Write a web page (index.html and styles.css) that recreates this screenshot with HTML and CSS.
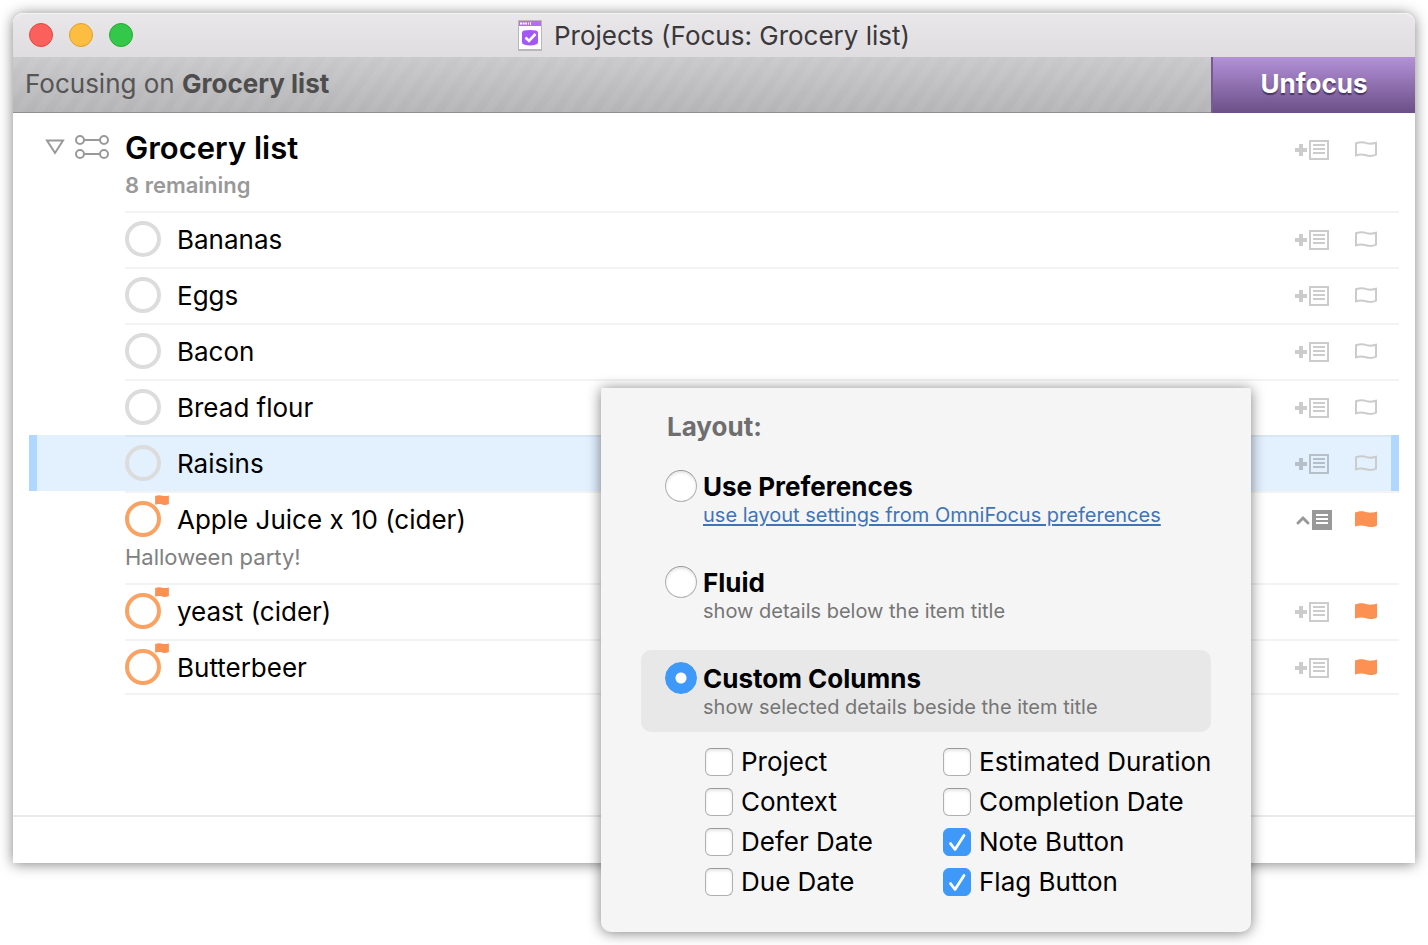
FILE: index.html
```
<!DOCTYPE html>
<html lang="en">
<head>
<meta charset="utf-8">
<meta name="viewport" content="width=device-width, initial-scale=1">
<title>Projects (Focus: Grocery list)</title>
<link rel="stylesheet" href="styles.css">
</head>
<body>
<svg class="symbols" aria-hidden="true">
  <symbol id="note-add" viewBox="0 0 37 20">
    <path d="M4 4h4v4h4v4H8v4H4v-4H0V8h4z" fill="currentColor"/>
    <path d="M15 1h18v18H15z" fill="none" stroke="currentColor" stroke-width="2"/>
    <path d="M18 5h12M18 9h12M18 13h12" stroke="currentColor" stroke-width="2"/>
  </symbol>
  <symbol id="note-open" viewBox="0 0 37 20">
    <path d="M3 13l5-5 5 5" fill="none" stroke="currentColor" stroke-width="3" stroke-linecap="round"/>
    <path d="M17 0h20v20H17z" fill="currentColor"/>
    <path d="M21 5h12M21 9h12M21 13h12" stroke="#fff" stroke-width="2"/>
  </symbol>
  <symbol id="flag-outline" viewBox="0 0 22 16">
    <path d="M1 2.300C7 .2 9 1.300 12 2.200C15 3 18 2.700 21 1.800V13.600C17 15.600 14 15.100 11 14.200C8 13.300 4 13.300 1 14.300Z" fill="none" stroke="currentColor" stroke-width="2"/>
  </symbol>
  <symbol id="flag-solid" viewBox="0 0 22 16">
    <path d="M0 1.500C6-.7 9 .4 12 1.300C15 2.100 18 1.900 22 .6V14.400C17 16.600 14 16.200 11 15.200C8 14.200 4 14.100 0 15.600Z" fill="currentColor"/>
  </symbol>
</svg>

<main class="window">
  <header class="titlebar">
    <div class="lights">
      <button class="light light-close" type="button" aria-label="Close"></button>
      <button class="light light-min" type="button" aria-label="Minimize"></button>
      <button class="light light-zoom" type="button" aria-label="Zoom"></button>
    </div>
    <div class="title">
      <svg class="doc-icon" viewBox="0 0 24 31" aria-hidden="true">
        <path d="M0 0h24v31H0z" fill="#b9b7ba"/>
        <path d="M1 1h22v28H1z" fill="#fff"/>
        <path d="M1 1h22v5H1z" fill="#b46dfa"/>
        <path d="M2 3.500h7M10 3.500h1" stroke="#fff" stroke-width="2" stroke-dasharray="2 .6"/>
        <path d="M12.500 2v3" stroke="#fff"/>
        <path d="M4 13Q4 11 6 10.600Q12 9.300 18 10.600Q20 11 20 13V22Q20 24 18 24.600Q12 26.500 6 24.600Q4 24 4 22Z" fill="#a357f5"/>
        <path d="M7.500 17.500l3.500 3.500 6.500-7" fill="none" stroke="#fff" stroke-width="2.600"/>
      </svg>
      <h1 class="title-text">Projects (Focus: Grocery list)</h1>
    </div>
  </header>

  <div class="focusbar">
    <p class="focus-label">Focusing on <strong>Grocery list</strong></p>
    <button class="unfocus" type="button">Unfocus</button>
  </div>

  <section class="outline">
    <div class="project">
      <div class="handles">
        <svg class="disclosure" viewBox="0 0 20 16" aria-hidden="true"><path d="M2 1.500h16L10 14z" fill="none" stroke="#999" stroke-width="2"/></svg>
        <svg class="parallel" viewBox="0 0 34 24" aria-hidden="true">
          <g fill="none" stroke="#999" stroke-width="2"><path d="M9 5h16M9 19h16"/><circle cx="5" cy="5" r="4"/><circle cx="29" cy="5" r="4"/><circle cx="5" cy="19" r="4"/><circle cx="29" cy="19" r="4"/></g>
        </svg>
      </div>
      <div class="project-text">
        <h2 class="project-name">Grocery list</h2>
        <p class="remaining">8 remaining</p>
      </div>
      <div class="actions">
        <button type="button" class="icon-btn" aria-label="Add note"><svg class="note"><use href="#note-add"/></svg></button>
        <button type="button" class="icon-btn" aria-label="Flag"><svg class="flag"><use href="#flag-outline"/></svg></button>
      </div>
    </div>

    <ul class="items">
      <li class="item"><div class="line">
        <button type="button" class="status" aria-label="Complete Bananas"></button><span class="name">Bananas</span>
        <div class="actions"><button type="button" class="icon-btn" aria-label="Add note"><svg class="note"><use href="#note-add"/></svg></button><button type="button" class="icon-btn" aria-label="Flag"><svg class="flag"><use href="#flag-outline"/></svg></button></div>
      </div></li>
      <li class="item"><div class="line">
        <button type="button" class="status" aria-label="Complete Eggs"></button><span class="name">Eggs</span>
        <div class="actions"><button type="button" class="icon-btn" aria-label="Add note"><svg class="note"><use href="#note-add"/></svg></button><button type="button" class="icon-btn" aria-label="Flag"><svg class="flag"><use href="#flag-outline"/></svg></button></div>
      </div></li>
      <li class="item"><div class="line">
        <button type="button" class="status" aria-label="Complete Bacon"></button><span class="name">Bacon</span>
        <div class="actions"><button type="button" class="icon-btn" aria-label="Add note"><svg class="note"><use href="#note-add"/></svg></button><button type="button" class="icon-btn" aria-label="Flag"><svg class="flag"><use href="#flag-outline"/></svg></button></div>
      </div></li>
      <li class="item"><div class="line">
        <button type="button" class="status" aria-label="Complete Bread flour"></button><span class="name">Bread flour</span>
        <div class="actions"><button type="button" class="icon-btn" aria-label="Add note"><svg class="note"><use href="#note-add"/></svg></button><button type="button" class="icon-btn" aria-label="Flag"><svg class="flag"><use href="#flag-outline"/></svg></button></div>
      </div></li>
      <li class="item item-selected"><div class="line">
        <button type="button" class="status" aria-label="Complete Raisins"></button><span class="name">Raisins</span>
        <div class="actions"><button type="button" class="icon-btn" aria-label="Add note"><svg class="note"><use href="#note-add"/></svg></button><button type="button" class="icon-btn" aria-label="Flag"><svg class="flag"><use href="#flag-outline"/></svg></button></div>
      </div></li>
      <li class="item"><div class="line">
        <button type="button" class="status status-flagged" aria-label="Complete Apple Juice"><svg class="badge"><use href="#flag-solid"/></svg></button><span class="name">Apple Juice x 10 (cider)</span>
        <div class="actions"><button type="button" class="icon-btn icon-open" aria-label="Hide note"><svg class="note"><use href="#note-open"/></svg></button><button type="button" class="icon-btn icon-flagged" aria-label="Unflag"><svg class="flag"><use href="#flag-solid"/></svg></button></div>
      </div>
      <p class="item-note">Halloween party!</p></li>
      <li class="item"><div class="line">
        <button type="button" class="status status-flagged" aria-label="Complete yeast"><svg class="badge"><use href="#flag-solid"/></svg></button><span class="name">yeast (cider)</span>
        <div class="actions"><button type="button" class="icon-btn" aria-label="Add note"><svg class="note"><use href="#note-add"/></svg></button><button type="button" class="icon-btn icon-flagged" aria-label="Unflag"><svg class="flag"><use href="#flag-solid"/></svg></button></div>
      </div></li>
      <li class="item item-last"><div class="line">
        <button type="button" class="status status-flagged" aria-label="Complete Butterbeer"><svg class="badge"><use href="#flag-solid"/></svg></button><span class="name">Butterbeer</span>
        <div class="actions"><button type="button" class="icon-btn" aria-label="Add note"><svg class="note"><use href="#note-add"/></svg></button><button type="button" class="icon-btn icon-flagged" aria-label="Unflag"><svg class="flag"><use href="#flag-solid"/></svg></button></div>
      </div></li>
    </ul>
  </section>
  <footer class="statusbar"></footer>
</main>

<aside class="popover">
  <h2 class="popover-title">Layout:</h2>
  <div class="options">
    <div class="option">
      <input class="radio" type="radio" name="layout" id="layout-prefs">
      <div><label class="option-name" for="layout-prefs">Use Preferences</label>
      <a class="option-hint option-link" href="#">use layout settings from OmniFocus preferences</a></div>
    </div>
    <div class="option">
      <input class="radio" type="radio" name="layout" id="layout-fluid">
      <div><label class="option-name" for="layout-fluid">Fluid</label>
      <p class="option-hint">show details below the item title</p></div>
    </div>
    <div class="option option-active">
      <input class="radio" type="radio" name="layout" id="layout-custom" checked>
      <div><label class="option-name" for="layout-custom">Custom Columns</label>
      <p class="option-hint">show selected details beside the item title</p></div>
    </div>
  </div>
  <div class="columns">
    <label class="column"><input class="check" type="checkbox">Project</label>
    <label class="column"><input class="check" type="checkbox">Estimated Duration</label>
    <label class="column"><input class="check" type="checkbox">Context</label>
    <label class="column"><input class="check" type="checkbox">Completion Date</label>
    <label class="column"><input class="check" type="checkbox">Defer Date</label>
    <label class="column"><input class="check" type="checkbox" checked>Note Button</label>
    <label class="column"><input class="check" type="checkbox">Due Date</label>
    <label class="column"><input class="check" type="checkbox" checked>Flag Button</label>
  </div>
</aside>
</body>
</html>
```

FILE: styles.css
```
* { box-sizing: border-box; }

body {
  margin: 0;
  min-height: 100vh;
  padding: 13px 13px 82px;
  display: flex;
  background: #fff;
  color: #000;
  font: 400 26px/34px Inter, "Liberation Sans", sans-serif;
}

h1, h2, p, ul { margin: 0; padding: 0; }
ul { list-style: none; }
button { margin: 0; padding: 0; border: 0; background: none; font: inherit; color: inherit; }
.symbols { position: absolute; width: 0; height: 0; }

/* Window */
.window {
  flex: 1;
  min-width: 0;
  display: flex;
  flex-direction: column;
  border-radius: 10px 10px 0 0;
  background: #fff;
  box-shadow: 0 1px 14px rgba(0, 0, 0, .5);
}

.titlebar {
  height: 44px;
  padding: 0 16px;
  display: grid;
  grid-template-columns: 1fr auto 1fr;
  align-items: center;
  border-radius: 10px 10px 0 0;
  background: linear-gradient(#e9e7ea, #dfdde0);
  box-shadow: inset 0 1px #f6f5f6;
}
.lights { display: flex; gap: 16px; }
.light { width: 24px; height: 24px; border-radius: 50%; border: 1px solid; }
.light-close { background: #fc605c; border-color: #e2463f; }
.light-min { background: #fdbd40; border-color: #dea032; }
.light-zoom { background: #34c84a; border-color: #27aa35; }
.title { display: flex; align-items: center; gap: 12px; }
.doc-icon { width: 24px; height: 31px; }
.title-text { padding-top: 2px; font-size: 26px; font-weight: 400; color: #3a383b; }

.focusbar {
  height: 56px;
  display: flex;
  justify-content: space-between;
  background:
    repeating-linear-gradient(125deg, rgba(255, 255, 255, .05) 0 7px, rgba(255, 255, 255, 0) 9px 16px),
    linear-gradient(#c9c8ca, #b4b3b5);
  box-shadow: inset 0 -1px #8f8f8f;
}
.focus-label { padding-left: 12px; line-height: 54px; color: #555; }
.focus-label strong { color: #4d4d4d; }
.unfocus {
  width: 204px;
  padding-bottom: 2px;
  border-left: 2px solid #765a94;
  background: linear-gradient(#b391d8, #6b4f86);
  color: #fff;
  font-weight: 700;
  text-shadow: 0 2px 1px rgba(50, 30, 70, .7);
}

/* Outline */
.outline { flex: 1; }
.project { display: flex; margin: 0 16px; min-height: 98px; padding-top: 16px; }
.handles { width: 96px; padding: 6px 16px 0; display: flex; gap: 10px; flex: none; }
.disclosure { width: 20px; height: 16px; margin-top: 4px; }
.parallel { width: 34px; height: 24px; }
.project-name { font-size: 31px; font-weight: 600; line-height: 38px; }
.remaining { font-size: 22px; font-weight: 600; line-height: 36px; color: #999; }

.item { margin: 0 16px; padding-left: 96px; }
.line {
  min-height: 56px;
  display: flex;
  align-items: center;
  gap: 16px;
  border-top: 2px solid #f3f3f3;
}
.item-last .line { box-shadow: inset 0 -2px #f3f3f3; }
.item-selected {
  background: #e3f0fe;
  box-shadow: inset 8px 0 #b0d7ff, inset -8px 0 #b0d7ff;
}
.item-selected .line { margin-right: 8px; border-color: #d9e6f4; }
.item-selected .actions { padding-right: 14px; color: #b5bfca; }
.item-selected .flag { color: #cbcccc; }
.item-note { padding-bottom: 16px; font-size: 22px; line-height: 20px; color: #808080; }

.status {
  position: relative;
  width: 36px;
  height: 36px;
  margin-bottom: 2px;
  flex: none;
  border: 4px solid #dcdcdc;
  border-radius: 50%;
}
.status-flagged { border-color: #fba263; }
.badge {
  position: absolute;
  top: -10px;
  left: 26px;
  width: 14px;
  height: 10px;
  color: #fd9053;
}

.actions {
  margin-left: auto;
  padding-right: 22px;
  height: 42px;
  display: flex;
  align-items: center;
  gap: 23px;
  color: #ccc;
}
.icon-btn { display: flex; }
.icon-open { color: #999; }
.icon-flagged { color: #fd9053; }
.note { width: 37px; height: 20px; }
.flag { width: 22px; height: 16px; margin-bottom: 2px; }

.statusbar { height: 48px; border-top: 2px solid #eaeaea; }

/* Layout popover */
.popover {
  position: absolute;
  right: 177px;
  bottom: 13px;
  width: 650px;
  padding: 24px 40px 30px;
  border-radius: 2px 2px 10px 10px;
  background: #f5f5f5;
  box-shadow: 0 1px 14px rgba(0, 0, 0, .5);
}
.popover-title {
  margin-bottom: 16px;
  padding-left: 26px;
  font-size: 26px;
  line-height: 30px;
  color: #6e6e6e;
}
.options { display: flex; flex-direction: column; gap: 14px; }
.option { display: flex; gap: 6px; padding: 12px 24px 14px; border-radius: 10px; }
.option-active { background: #e8e8e8; }
.option-name { display: block; font-weight: 700; }
.option-hint { display: block; font-size: 20px; line-height: 22px; color: #767676; }
.option-link { color: #3f74b8; text-decoration-thickness: 2px; text-underline-offset: 2px; }

.radio, .check {
  appearance: none;
  margin: 0;
  flex: none;
  border: 1px solid #b0b0b0;
  border-top-color: #999;
  background: #fff;
  box-shadow: inset 0 2px 3px rgba(0, 0, 0, .1);
}
.radio { width: 32px; height: 32px; border-radius: 50%; }
.radio:checked {
  border-color: #3f99f8;
  background: radial-gradient(circle, #fff 5px, #3f99f8 6px);
  box-shadow: none;
}
.check { width: 28px; height: 28px; border-radius: 6px; }
.check:checked {
  border-color: #3f99f8;
  background: #3f99f8 url("data:image/svg+xml,%3Csvg xmlns='http://www.w3.org/2000/svg' viewBox='0 0 26 26'%3E%3Cpath d='M6.500 14.500l4.500 6 9-14' fill='none' stroke='%23fff' stroke-width='2.800' stroke-linecap='round' stroke-linejoin='round'/%3E%3C/svg%3E") center / 26px 26px no-repeat;
  box-shadow: none;
}

.columns {
  margin-top: 10px;
  padding-left: 64px;
  display: grid;
  grid-template-columns: 238px 1fr;
  grid-auto-rows: 40px;
  white-space: nowrap;
}
.column { display: flex; align-items: center; gap: 8px; }
```
